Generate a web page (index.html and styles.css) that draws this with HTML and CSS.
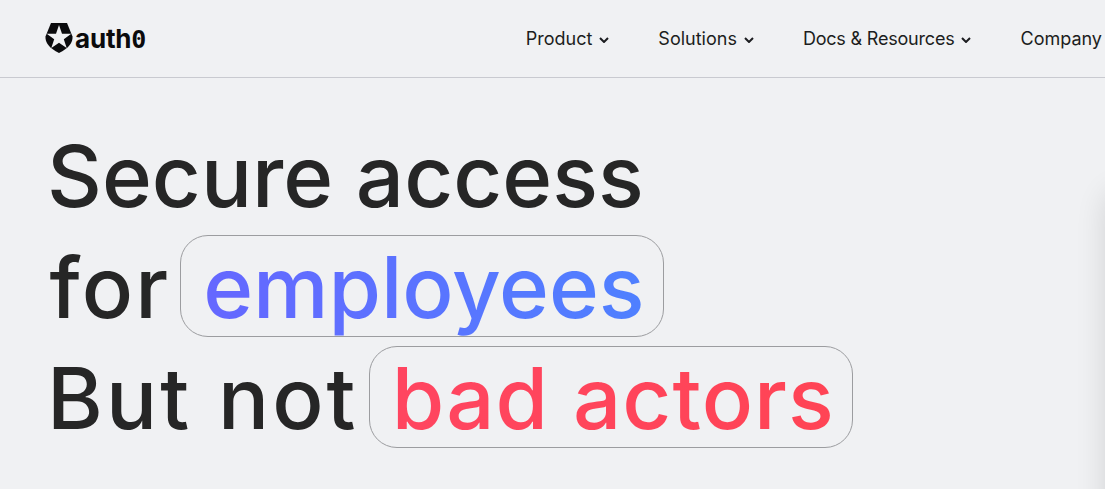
FILE: index.html
```html
<!DOCTYPE html>
<html lang="en">
<head>
<meta charset="utf-8">
<title>Auth0</title>
<link rel="stylesheet" href="styles.css">
</head>
<body>
<header class="header">
  <a class="logo" href="#">
    <svg class="logo-mark" viewBox="0 0 28 30" width="28" height="30" aria-hidden="true">
      <path class="logo-shield" d="M6 0H22L27.500 13.500C28 19.500 23.500 25.500 14 30C4.500 25.500 0 19.500 0.500 13.500Z"/>
      <path class="logo-star" d="M14 2L17 10.800H26.300L18.800 16.300L21.700 25L14 19.700L6.300 25L9.200 16.300L1.700 10.800H11Z"/>
    </svg>
    <span class="logo-text">auth<span class="logo-zero">0</span></span>
  </a>
  <nav class="nav">
    <a class="nav-item" href="#">Product<svg class="chev" viewBox="0 0 10 6" width="10" height="6"><path d="M1 1l4 4 4-4"/></svg></a>
    <a class="nav-item" href="#">Solutions<svg class="chev" viewBox="0 0 10 6" width="10" height="6"><path d="M1 1l4 4 4-4"/></svg></a>
    <a class="nav-item nav-item-tight" href="#">Docs &amp; Resources<svg class="chev" viewBox="0 0 10 6" width="10" height="6"><path d="M1 1l4 4 4-4"/></svg></a>
    <a class="nav-item" href="#">Company</a>
  </nav>
</header>
<main class="hero">
  <h1 class="title">
    <span class="line">Secure access</span>
    <span class="line"><span class="word-for">for</span><span class="pill"><span class="grad-blue">employees</span></span></span>
    <span class="line"><span class="word-but">But not</span><span class="pill"><span class="grad-red">bad actors</span></span></span>
  </h1>
</main>
<div class="side-card"></div>
</body>
</html>
```
FILE: styles.css
```css
html, body { margin: 0; height: 100%; overflow: hidden; }
body {
  background: #f0f1f3;
  color: #262626;
  font-family: "Inter", "Liberation Sans", sans-serif;
  position: relative;
}
.header {
  height: 77px;
  border-bottom: 1px solid #c9cad0;
  display: flex;
  align-items: center;
  justify-content: space-between;
  padding: 0 0 0 45px;
  white-space: nowrap;
}
.logo {
  display: flex;
  align-items: center;
  gap: 2px;
  color: #0b0b0d;
  text-decoration: none;
}
.logo-mark { margin-top: -1px; }
.logo-shield { fill: #0b0b0d; }
.logo-star { fill: #f0f1f3; }
.logo-text {
  font-weight: 700;
  font-size: 26px;
  letter-spacing: -0.2px;
  margin-top: -1px;
}
.logo-zero { font-family: "DejaVu Sans Mono", monospace; font-size: 25px; letter-spacing: -1px; }
.nav {
  display: flex;
  gap: 49px;
  margin-right: 3px;
}
.nav-item {
  display: flex;
  align-items: center;
  gap: 7px;
  font-size: 18px;
  color: #1c1d20;
  text-decoration: none;
}
.nav-item-tight { letter-spacing: -0.2px; }
.chev { margin-top: 3px; fill: none; stroke: #1c1d20; stroke-width: 2; }
.hero { padding: 43px 0 0 47px; }
.title {
  margin: 0;
  font-weight: 500;
  font-size: 85px;
  line-height: 111px;
  white-space: nowrap;
}
.line {
  display: flex;
  align-items: baseline;
  gap: 10px;
}
.word-for { letter-spacing: 2.2px; margin-left: 2.500px; }
.word-but { letter-spacing: 3.100px; }
.pill {
  display: inline-block;
  width: 484px;
  box-sizing: border-box;
  line-height: 96px;
  padding: 4px 0 0 22px;
  border: 1px solid #9c9da0;
  border-radius: 28px;
}
.grad-blue {
  letter-spacing: -0.1px;
  background: linear-gradient(90deg, #6567ff, #4f80ff);
  -webkit-background-clip: text;
  background-clip: text;
  color: transparent;
}
.grad-red {
  letter-spacing: 1.1px;
  background: linear-gradient(90deg, #ff4560, #ff4455);
  -webkit-background-clip: text;
  background-clip: text;
  color: transparent;
}
.side-card {
  position: absolute;
  top: 190px;
  left: 1105px;
  width: 300px;
  height: 600px;
  box-shadow: 0 0 30px rgba(0,0,0,.12);
  border-radius: 20px;
}
```
